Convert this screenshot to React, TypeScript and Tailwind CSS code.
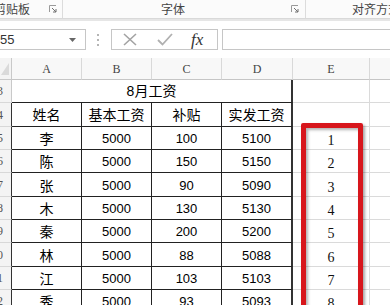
import React from 'react';

const data: [string, string, string, string, string, string, number][] = [
  ['5', '李', '5000', '100', '5100', '1', 23],
  ['6', '陈', '5000', '150', '5150', '2', 23],
  ['7', '张', '5000', '90', '5090', '3', 24],
  ['8', '木', '5000', '130', '5130', '4', 23],
  ['9', '秦', '5000', '200', '5200', '5', 23],
  ['10', '林', '5000', '88', '5088', '6', 24],
  ['11', '江', '5000', '103', '5103', '7', 23],
  ['12', '秀', '5000', '93', '5093', '8', 23],
];

function Launcher() {
  return (
    <svg width="8" height="8" viewBox="0 0 8 8" className="shrink-0">
      <path d="M0.5 7V0.5H7" fill="none" stroke="#9a9a9a" strokeWidth="1" />
      <path d="M3 3L7 7M7 4V7H4" fill="none" stroke="#6f6f6f" strokeWidth="1" />
    </svg>
  );
}

function RowHead({ n, dark, h }: { n: string; dark?: boolean; h: string }) {
  return (
    <div
      className={`w-[12px] shrink-0 ${h} overflow-hidden flex items-center justify-end bg-[#f4f4f4] border-b border-[#d8d8d8] ${
        dark ? 'border-r border-r-[#333333]' : 'border-r border-r-[#c9c9c9]'
      }`}
    >
      <span className="shrink-0 whitespace-nowrap mr-[8px] text-[12px] text-[#555] font-['Liberation_Serif',serif]">{n}</span>
    </div>
  );
}

export default function App() {
  return (
    <div className="relative w-[390px] h-[305px] overflow-hidden bg-white font-['Liberation_Sans','Noto_Sans_CJK_SC',sans-serif]">
      {/* Ribbon bottom */}
      <div className="flex h-[19px] bg-[#fbfbfb] border-b border-[#d9d9d9] text-[12px] text-[#444] font-['Noto_Sans_CJK_SC',sans-serif]">
        <div className="flex items-center w-[63px] shrink-0 border-r border-[#dcdcdc]">
          <span className="ml-[-6px] flex-1 whitespace-nowrap leading-none">剪贴板</span>
          <span className="mr-[5px]"><Launcher /></span>
        </div>
        <div className="flex items-center w-[243px] shrink-0 border-r border-[#dcdcdc]">
          <span className="flex-1 text-center pr-[8px] leading-none">字体</span>
          <span className="mr-[6px]"><Launcher /></span>
        </div>
        <div className="flex items-center flex-1">
          <span className="pl-[46px] whitespace-nowrap leading-none">对齐方式</span>
        </div>
      </div>
      <div className="h-[2px] bg-[#e6e6e6]" />
      {/* Formula bar */}
      <div className="flex items-start h-[37px] pt-[8px]">
        <div className="ml-[-2px] w-[88px] h-[21px] shrink-0 border border-[#c6c6c6] flex items-center justify-between">
          <span className="text-[13px] text-[#333] pl-[1px] leading-none">55</span>
          <svg width="7" height="4" viewBox="0 0 7 4" className="mr-[9px]">
            <path d="M0 0H7L3.5 4Z" fill="#666" />
          </svg>
        </div>
        <div className="w-[24px] h-[21px] shrink-0 flex flex-col items-center justify-center gap-[3px]">
          <span className="w-[2px] h-[2px] bg-[#b5b5b5]" />
          <span className="w-[2px] h-[2px] bg-[#b5b5b5]" />
          <span className="w-[2px] h-[2px] bg-[#b5b5b5]" />
        </div>
        <div className="ml-[1px] w-[107px] h-[21px] shrink-0 border border-[#c6c6c6] flex items-center">
          <svg width="14" height="13" viewBox="0 0 14 13" className="ml-[11px]">
            <path d="M1 1L13 12M13 1L1 12" stroke="#a3a3a3" strokeWidth="1.6" fill="none" />
          </svg>
          <svg width="16" height="13" viewBox="0 0 16 13" className="ml-[20px]">
            <path d="M1 7L5.5 11.5L15 1" stroke="#b0b0b0" strokeWidth="1.8" fill="none" />
          </svg>
          <span className="ml-[18px] text-[17px] italic text-[#333] font-['Liberation_Serif',serif] leading-none">fx</span>
        </div>
        <div className="ml-[4px] flex-1 h-[21px] border border-[#c6c6c6] mr-[-2px]" />
      </div>

      {/* Grid */}
      <div className="flex flex-col">
        {/* column header */}
        <div className="flex h-[22px] text-[12px] text-[#444] font-['Liberation_Serif',serif]">
          <div className="w-[12px] shrink-0 bg-[#f4f4f4] border-r border-b border-[#c9c9c9] relative overflow-hidden">
            <svg width="12" height="22" viewBox="0 0 12 22" className="absolute left-0 top-0">
              <path d="M1 17L9 17L9 5Z" fill="#dadada" />
            </svg>
          </div>
          {['A', 'B', 'C', 'D', 'E', 'F'].map((c, i) => (
            <div
              key={c}
              className={`${
                ['w-[70px]', 'w-[70px]', 'w-[70px]', 'w-[71px]', 'w-[77px]', 'w-[40px]'][i]
              } shrink-0 flex items-end justify-center pb-[1px] bg-[#f8f8f8] border-r border-[#d9d9d9] border-b border-b-[#c6c6c6]`}
            >
              {c !== 'F' ? c : ''}
            </div>
          ))}
        </div>
        {/* row 3 title */}
        <div className="flex h-[23px]">
          <RowHead n="3" h="h-[23px]" />
          <div className="w-[281px] shrink-0 flex items-center justify-center border-b border-[#222] border-r-2 border-r-[#333] text-[14px] text-black font-['Liberation_Sans','Noto_Sans_CJK_SC',sans-serif]">
            8月工资
          </div>
          <div className="w-[77px] shrink-0 border-r border-b border-[#dadada]" />
          <div className="w-[40px] shrink-0 border-b border-[#dadada]" />
        </div>
        {/* row 4 header */}
        <div className="flex h-[24px] text-[14px] text-black font-['Noto_Sans_CJK_SC',sans-serif]">
          <RowHead n="4" dark h="h-[24px]" />
          <div className="w-[70px] shrink-0 flex items-center justify-center border-r border-b border-[#222]">姓名</div>
          <div className="w-[70px] shrink-0 flex items-center justify-center border-r border-b border-[#222]">基本工资</div>
          <div className="w-[70px] shrink-0 flex items-center justify-center border-r border-b border-[#222]">补贴</div>
          <div className="w-[71px] shrink-0 flex items-center justify-center border-b border-[#222] border-r-2 border-r-[#333]">实发工资</div>
          <div className="w-[77px] shrink-0 border-r border-b border-[#dadada]" />
          <div className="w-[40px] shrink-0 border-b border-[#dadada]" />
        </div>
        {data.map(([n, name, base, sub, total, e, h]) => {
          const hc = h === 24 ? 'h-[24px]' : 'h-[23px]';
          return (
            <div key={n} className={`flex ${hc} text-[13px] text-black`}>
              <RowHead n={n} dark h={hc} />
              <div className="w-[70px] shrink-0 flex items-center justify-center pt-[1px] border-r border-b border-[#222] text-[14px] font-['Noto_Sans_CJK_SC',sans-serif]">
                {name}
              </div>
              <div className="w-[70px] shrink-0 flex items-center justify-center pt-[2px] border-r border-b border-[#222]">{base}</div>
              <div className="w-[70px] shrink-0 flex items-center justify-center pt-[2px] border-r border-b border-[#222]">{sub}</div>
              <div className="w-[71px] shrink-0 flex items-center justify-center pt-[2px] border-b border-[#222] border-r-2 border-r-[#333]">{total}</div>
              <div className="w-[77px] shrink-0 flex items-center justify-center pt-[5px] border-r border-b border-[#dadada] text-[14px] text-[#111] font-['Liberation_Serif',serif]">
                {e}
              </div>
              <div className="w-[40px] shrink-0 border-b border-[#dadada]" />
            </div>
          );
        })}
      </div>

      {/* red highlight box */}
      <div className="absolute left-[301px] top-[123px] w-[62px] h-[230px] border-[5px] border-[#d7161c] rounded-[2px] shadow-[2px_2px_3px_rgba(0,0,0,0.35),inset_2px_2px_3px_rgba(0,0,0,0.3)]" />
    </div>
  );
}
